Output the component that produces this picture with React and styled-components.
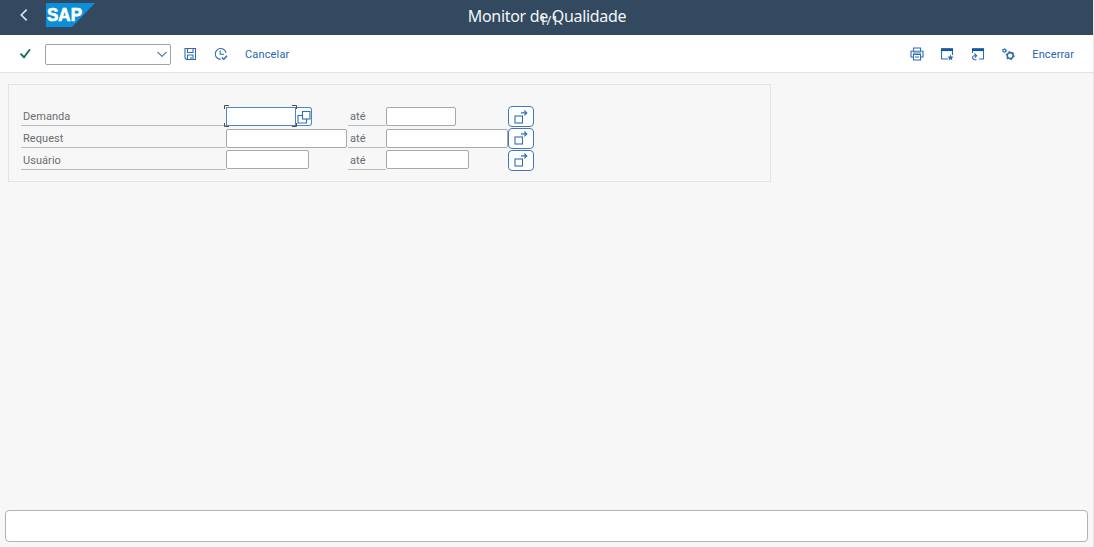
import React from 'react';
import styled, { createGlobalStyle } from 'styled-components';

const Global = createGlobalStyle`
  * { box-sizing: border-box; }
  body { margin: 0; background: #f7f7f7; font-family: Roboto, "Liberation Sans", sans-serif; }
  svg { display: block; flex: none; overflow: visible; }
  button { font: inherit; padding: 0; margin: 0; border: 0; background: none; }
`;

const Page = styled.div`
  height: 547px;
  display: flex;
  flex-direction: column;
  overflow: hidden;
  border-right: 1px solid #e6e6e6;
`;

const Header = styled.header`
  position: relative;
  flex: none;
  height: 35px;
  margin-right: -1px;
  background: #33495f;
  display: flex;
  align-items: flex-start;
  padding: 3px 0 0 20px;
`;

const BackButton = styled.button`
  margin: 6px 18px 0 0;
`;

const Title = styled.h1`
  position: absolute;
  left: 0;
  right: 0;
  top: 6px;
  margin: 0;
  text-align: center;
  font: 400 16px/20px "Noto Sans", sans-serif;
  letter-spacing: ${(p) => p.$tracking};
  color: #f2f5f8;
`;

const PageCount = styled.span`
  position: absolute;
  left: 539px;
  top: 13px;
  font: 400 13px/14px "Noto Sans", sans-serif;
  color: #f2f5f8;
`;

const Toolbar = styled.div`
  flex: none;
  height: 38px;
  background: #fff;
  border-bottom: 1px solid #e2e2e2;
  display: flex;
  align-items: center;
  padding: 1px 19px 0 19px;
`;

const ToolIcon = styled.button`
  width: 14px;
  height: 14px;
  margin-right: ${(p) => p.$gap}px;
`;

const CommandField = styled.div`
  width: 126px;
  height: 21px;
  margin: 0 12px 0 12px;
  border: 1px solid #a3a3a3;
  border-radius: 2px;
  display: flex;
  align-items: center;
  justify-content: flex-end;
  padding-right: 3px;
`;

const TextButton = styled.button`
  && { font-size: 11px; line-height: 14px; padding-top: 1px; }
  color: #2765ad;
  letter-spacing: ${(p) => p.$tracking};
`;

const Spacer = styled.div`
  flex: 1;
`;

const Content = styled.main`
  flex: 1;
  padding: 11px 0 0 8px;
`;

const Panel = styled.section`
  width: 763px;
  height: 98px;
  border: 1px solid #e3e3e3;
  padding: 21px 0 0 12px;
`;

const Row = styled.div`
  height: 21.7px;
  display: grid;
  grid-template-columns: 204.6px 122.4px 38.4px 121.6px auto;
  align-items: start;
`;

const Label = styled.label`
  height: 20.4px;
  padding: 4.3px 0 0 2px;
  border-bottom: 1px solid #bcbcbc;
  font-size: 11px;
  line-height: 14px;
  letter-spacing: 0.06px;
  color: #6a6d70;
`;

const FieldCell = styled.div`
  display: flex;
  position: relative;
  padding-top: 1px;
`;

const Field = styled.input`
  width: ${(p) => p.$w}px;
  height: 19px;
  padding: 0 3px;
  outline: 0;
  background: #fff;
  border: 1px solid ${(p) => (p.$active ? '#4a87c4' : '#a8a8a8')};
  border-radius: ${(p) => (p.$active ? '0' : '2px')};
`;

const HelpButton = styled.button`
  && { border: 1px solid #4a87c4; border-left: 0; }
  width: 16px;
  height: 19px;
  border-radius: 0 3px 3px 0;
  background: #fff;
  display: flex;
  align-items: center;
  padding-left: 1px;
`;

const FocusCorners = styled.svg`
  position: absolute;
  left: -2px;
  top: -1px;
`;

const MoreButton = styled.button`
  && { border: 1px solid #3f7ab8; background: #fff; margin-top: 0.2px; }
  width: 26px;
  height: 21px;
  border-radius: 4px;
  display: flex;
  align-items: center;
  justify-content: center;
`;

const MessageBar = styled.footer`
  flex: none;
  height: 32px;
  margin: 0 5px 5px 5px;
  background: #fff;
  border: 1px solid #b2b2b2;
  border-radius: 4px;
`;

const Icon = ({ size = 14, children }) => (
  <svg width={size} height={size} viewBox={`0 0 ${size} ${size}`} fill="none" stroke="#2f6db3" strokeWidth="1.1">
    {children}
  </svg>
);

const Logo = () => (
  <svg width="49" height="24" viewBox="0 0 49 24">
    <path d="M0 0H49L26 24H0Z" fill="#0a8fdd" />
    <text x="1" y="17.6" textLength="35" lengthAdjust="spacingAndGlyphs" fontFamily="Liberation Sans, sans-serif" fontWeight="700" fontSize="19" fill="#fff" stroke="#fff" strokeWidth="0.7">SAP</text>
  </svg>
);

const rows = [
  { label: 'Demanda', from: 70, to: 70, active: true },
  { label: 'Request', from: 121.4, to: 121.6 },
  { label: 'Usuário', from: 83, to: 83 },
];

const RangeRow = ({ label, from, to, active }) => (
  <Row>
    <Label>{label}</Label>
    <FieldCell>
      <Field $w={from} $active={active} aria-label={label} />
      {active && (
        <>
          <HelpButton aria-label="Ajuda">
            <Icon>
              <rect x="5.5" y="1.5" width="7.5" height="7.5" />
              <path d="M5.5 5.5H1V13H9.5V9" />
            </Icon>
          </HelpButton>
          <FocusCorners width="75" height="23" fill="none" stroke="#4c4c4c">
            <path d="M.5 4V.5H5M68 .5H72.5V4M.5 18V21.5H5M68 21.5H72.5V18" />
          </FocusCorners>
        </>
      )}
    </FieldCell>
    <Label>até</Label>
    <FieldCell>
      <Field $w={to} aria-label={`${label} até`} />
    </FieldCell>
    <MoreButton aria-label="Seleção múltipla">
      <Icon>
        <rect x="1" y="6" width="7.5" height="7" />
        <path d="M7 2.9H12.5M10.3 .5L12.8 2.9L10.3 5.3" />
      </Icon>
    </MoreButton>
  </Row>
);

export default function App() {
  return (
    <>
      <Global />
      <Page>
        <Header>
          <BackButton aria-label="Voltar">
            <svg width="8" height="12" viewBox="0 0 8 12" fill="none" stroke="#d3e3f3" strokeWidth="1.7"><path d="M6.7 .7L1.3 6L6.7 11.3" /></svg>
          </BackButton>
          <Logo />
          <Title $tracking="-0.32px">Monitor de Qualidade</Title>
          <PageCount>1/1</PageCount>
        </Header>
        <Toolbar>
          <ToolIcon $gap={0} aria-label="Confirmar">
            <svg width="14" height="14" viewBox="0 0 14 14" fill="none" stroke="#17724a" strokeWidth="1.9"><path d="M1.5 6.6L5 10.2L11 2.3" /></svg>
          </ToolIcon>
          <CommandField>
            <svg width="10" height="7" viewBox="0 0 10 7" fill="none" stroke="#5784bd" strokeWidth="1.2"><path d="M.5 1L5 5.5L9.5 1" /></svg>
          </CommandField>
          <ToolIcon $gap={17} aria-label="Salvar">
            <Icon>
              <path d="M2 1.5H12.5V12.5H3.5L2 11ZM4.5 1.5V5.5H10V1.5M4.5 12.5V8H10V12.5M8 10V12.5" />
            </Icon>
          </ToolIcon>
          <ToolIcon $gap={17} aria-label="Executar">
            <Icon>
              <path d="M12 6A5.4 5.4 0 1 0 7 12.3M6.2 3.5V7.3H10" />
              <path d="M7.8 10.5L9.8 12.3L13 8.7" strokeWidth="1.5" />
            </Icon>
          </ToolIcon>
          <TextButton $tracking="0.15px">Cancelar</TextButton>
          <Spacer />
          <ToolIcon $gap={16} aria-label="Imprimir">
            <Icon>
              <path d="M3.5 4V1H10.5V4M3.5 10H1V4.2H13V10H10.5M3.5 7.5H10.5V13H3.5ZM5 10H9M3 6H11" />
            </Icon>
          </ToolIcon>
          <ToolIcon $gap={17} aria-label="Nova janela">
            <Icon>
              <path d="M8 12H1.5V2H12.5V8" />
              <path d="M1 2.7H13" strokeWidth="2.8" stroke="#0f57a5" />
              <path d="M10.5 7.5L11.3 9.4L13.5 9.7L11.9 11.2L12.4 13.3L10.5 12.2L8.6 13.3L9.1 11.2L7.5 9.7L9.7 9.4Z" fill="#2f6db3" stroke="none" />
            </Icon>
          </ToolIcon>
          <ToolIcon $gap={16} aria-label="Criar atalho">
            <Icon>
              <path d="M1.5 6V2H12.5V12H8M5.5 12.7H3.2C.8 11.7 1 8.7 3.5 8.7H5M3.4 6.5L5.7 8.7L3.8 10.7" />
              <path d="M1 2.7H13" strokeWidth="2.8" stroke="#0f57a5" />
            </Icon>
          </ToolIcon>
          <ToolIcon $gap={17} aria-label="Configurações">
            <Icon>
              <circle cx="3.4" cy="3.6" r="1.4" />
              <circle cx="3.4" cy="3.6" r="2.2" strokeWidth=".9" strokeDasharray="1 1.3" />
              <circle cx="9.2" cy="8.6" r="3" strokeWidth="1.6" />
              <circle cx="9.2" cy="8.6" r="4" strokeWidth="1.1" strokeDasharray="1.5 2.69" />
            </Icon>
          </ToolIcon>
          <TextButton $tracking="0.1px">Encerrar</TextButton>
        </Toolbar>
        <Content>
          <Panel>
            {rows.map((row) => <RangeRow key={row.label} {...row} />)}
          </Panel>
        </Content>
        <MessageBar />
      </Page>
    </>
  );
}
